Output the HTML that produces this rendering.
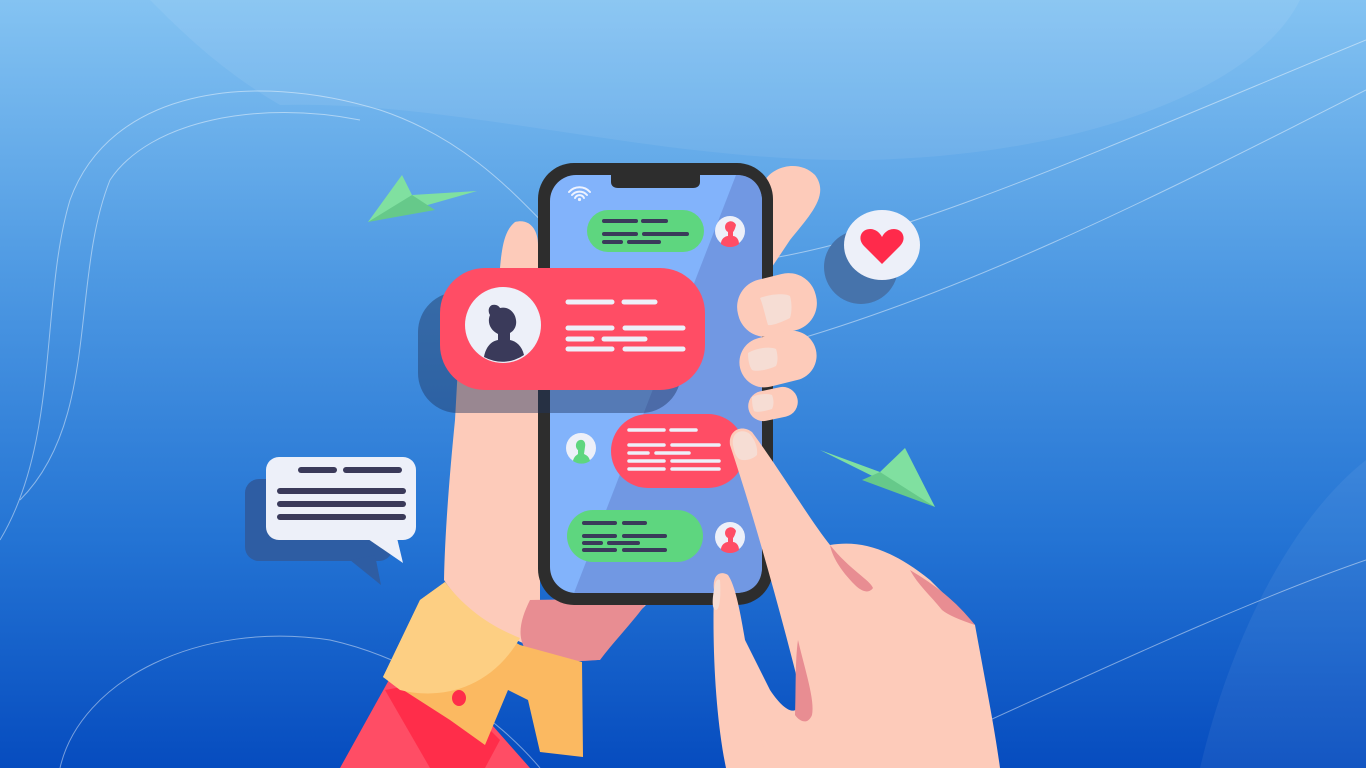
<!DOCTYPE html>
<html><head><meta charset="utf-8"><style>html,body{margin:0;padding:0;width:1366px;height:768px;overflow:hidden}svg{display:block}</style></head>
<body>
<svg width="1366" height="768" viewBox="0 0 1366 768" xmlns="http://www.w3.org/2000/svg">
<defs>
<linearGradient id="bg" x1="0" y1="0" x2="0" y2="1">
<stop offset="0" stop-color="#84c3f2"/><stop offset="0.35" stop-color="#4f9ae3"/><stop offset="0.7" stop-color="#2474d4"/><stop offset="1" stop-color="#064cbf"/>
</linearGradient>
</defs>
<rect width="1366" height="768" fill="url(#bg)"/>
<path d="M150 0 H1300 C1250 100 1050 160 850 160 C650 160 450 100 280 105 C220 70 180 30 150 0 Z" fill="#ffffff" opacity="0.07"/>
<path d="M1366 460 C1290 520 1230 640 1200 768 H1366 Z" fill="#ffffff" opacity="0.06"/>
<g fill="none" stroke="#ffffff" stroke-opacity="0.45" stroke-width="1">
<path d="M0 540 C60 440 40 300 70 200 C110 90 250 70 380 110 C470 140 520 200 560 240"/>
<path d="M20 500 C100 420 70 280 110 180 C150 120 260 100 360 120"/>
<path d="M760 260 C900 240 1100 150 1366 40"/>
<path d="M760 350 C950 300 1150 200 1366 90"/>
<path d="M60 768 C80 680 200 620 330 640 C420 660 500 720 540 768"/>
<path d="M990 720 C1100 670 1250 600 1366 560"/>
</g>
<polygon points="368,222 402,175 412,195 477,191" fill="#80e0a0"/>
<polygon points="368,222 412,195 435,210" fill="#66c98a"/>
<polygon points="820,450 880,472 905,448 935,507" fill="#80e0a0"/>
<polygon points="862,480 880,472 935,507" fill="#66c98a"/>
<rect x="245" y="479" width="148" height="82" rx="14" fill="#2e5da3"/>
<polygon points="350,560 381,585 375,555" fill="#2e5da3"/>
<rect x="266" y="457" width="150" height="83" rx="13" fill="#edf0f9"/>
<polygon points="368,539 403,563 397,538" fill="#edf0f9"/>
<g stroke="#3a3a5a" stroke-width="6" stroke-linecap="round">
<line x1="301" y1="470" x2="334" y2="470"/><line x1="346" y1="470" x2="399" y2="470"/>
<line x1="280" y1="491" x2="403" y2="491"/><line x1="280" y1="504" x2="403" y2="504"/><line x1="280" y1="517" x2="403" y2="517"/>
</g>
<circle cx="861" cy="267" r="37" fill="#4673ab"/>
<ellipse cx="882" cy="245" rx="38" ry="35" fill="#edf0f9"/>
<path d="M882 264 L864 246 C857 239 861 229 870 229 C876 229 880 233 882 237 C884 233 888 229 894 229 C903 229 907 239 900 246 Z" fill="#ff2a4b"/>
<polygon points="340,768 400,660 470,700 530,768" fill="#ff4d65"/>
<polygon points="385,690 440,680 500,740 485,768 430,768" fill="#ff2d4a"/>
<path d="M455 420 C450 470 445 530 444 580 C470 620 520 650 570 655 C600 640 640 615 650 600 L540 600 L540 260 C535 235 520 225 510 230 C500 245 500 270 500 290 L460 330 Z" fill="#fdcbba"/>
<path d="M530 600 C520 620 515 640 530 655 C560 665 590 660 600 660 C615 640 635 620 650 598 Z" fill="#e88d92"/>
<polygon points="383,677 420,600 445,582 475,620 520,645 582,662 583,757 540,752 528,700 508,690 485,745 450,720" fill="#fbb961"/>
<path d="M383 677 L420 600 L445 582 C470 615 500 630 520 638 C490 690 440 700 400 690 Z" fill="#fdcf83"/>
<ellipse cx="459" cy="698" rx="7" ry="8" fill="#ff2d4a"/>
<path d="M765 180 C775 165 800 160 815 175 C830 195 810 215 790 240 L770 270 Z" fill="#fdcbba"/>
<rect x="538" y="163" width="235" height="442" rx="36" fill="#2d2d2d"/>
<rect x="550" y="175" width="212" height="418" rx="26" fill="#82b3fb"/>
<path d="M737 175 H736 L574 593 H736 C752 593 762 583 762 567 V201 C762 186 752 175 737 175 Z" fill="#7198e3"/>
<path d="M611 175 H700 V182 C700 186 697 188 693 188 H618 C614 188 611 186 611 182 Z" fill="#2d2d2d"/>
<g fill="none" stroke="#eef3ff" stroke-width="2" stroke-linecap="round">
<path d="M569 192 A14 14 0 0 1 590 192"/><path d="M572 195 A10 10 0 0 1 587 195"/><path d="M575 198 A5 5 0 0 1 584 198"/>
</g>
<circle cx="579.5" cy="199.5" r="1.6" fill="#eef3ff"/>
<rect x="587" y="210" width="117" height="42" rx="21" fill="#5ed67f"/>
<g stroke="#3a3a5a" stroke-width="4" stroke-linecap="round">
<line x1="604" y1="221" x2="636" y2="221"/><line x1="643" y1="221" x2="666" y2="221"/>
<line x1="604" y1="234" x2="636" y2="234"/><line x1="644" y1="234" x2="687" y2="234"/>
<line x1="604" y1="242" x2="621" y2="242"/><line x1="629" y1="242" x2="659" y2="242"/>
</g>
<circle cx="730" cy="231" r="15" fill="#edf0f9"/>
<path d="M721 244 C721 238 726 236 728 236 L728 232 C724 230 724 224 728 222 C731 220 735 222 736 225 C735 229 734 231 733 232 L733 236 C735 236 739 238 739 244 A15 15 0 0 1 721 244 Z" fill="#ff4d65"/>
<rect x="611" y="414" width="134" height="74" rx="37" fill="#ff4d65"/>
<g stroke="#edf0f9" stroke-width="3.5" stroke-linecap="round">
<line x1="629" y1="430" x2="664" y2="430"/><line x1="671" y1="430" x2="696" y2="430"/>
<line x1="629" y1="445" x2="664" y2="445"/><line x1="672" y1="445" x2="719" y2="445"/>
<line x1="629" y1="453" x2="648" y2="453"/><line x1="656" y1="453" x2="689" y2="453"/>
<line x1="629" y1="461" x2="664" y2="461"/><line x1="672" y1="461" x2="719" y2="461"/>
<line x1="629" y1="469" x2="664" y2="469"/><line x1="672" y1="469" x2="719" y2="469"/>
</g>
<circle cx="581" cy="448" r="15" fill="#edf0f9"/>
<path d="M573 461 C574 456 577 455 578 454 L578 450 C575 448 575 441 580 440 C584 439 586 443 585 447 L584 454 C586 455 589 456 590 461 A15 15 0 0 1 573 461 Z" fill="#5ed67f"/>
<rect x="567" y="510" width="136" height="52" rx="26" fill="#5ed67f"/>
<g stroke="#3a3a5a" stroke-width="4" stroke-linecap="round">
<line x1="584" y1="523" x2="615" y2="523"/><line x1="624" y1="523" x2="645" y2="523"/>
<line x1="584" y1="536" x2="615" y2="536"/><line x1="624" y1="536" x2="665" y2="536"/>
<line x1="584" y1="543" x2="601" y2="543"/><line x1="609" y1="543" x2="638" y2="543"/>
<line x1="584" y1="550" x2="615" y2="550"/><line x1="624" y1="550" x2="665" y2="550"/>
</g>
<circle cx="730" cy="537" r="15" fill="#edf0f9"/>
<path d="M721 550 C721 544 726 542 728 542 L728 538 C724 536 724 530 728 528 C731 526 735 528 736 531 C735 535 734 537 733 538 L733 542 C735 542 739 544 739 550 A15 15 0 0 1 721 550 Z" fill="#ff4d65"/>
<rect x="737" y="276" width="80" height="58" rx="28" transform="rotate(-14 777 305)" fill="#fdcbba"/>
<path d="M760 298 C770 294 785 293 790 296 C792 303 792 312 790 318 C782 322 772 326 768 325 C765 315 763 305 760 298 Z" fill="#f6ddd4"/>
<rect x="739" y="334" width="78" height="50" rx="25" transform="rotate(-14 778 359)" fill="#fdcbba"/>
<path d="M748 353 C756 348 770 346 776 349 C778 355 778 362 776 366 C768 370 756 372 752 370 C749 366 748 359 748 353 Z" fill="#f6ddd4"/>
<rect x="748" y="389" width="50" height="30" rx="15" transform="rotate(-12 773 404)" fill="#fdcbba"/>
<path d="M752 397 C758 394 768 393 772 395 C774 400 774 405 772 409 C765 411 757 413 754 411 C752 406 752 401 752 397 Z" fill="#f6ddd4"/>
<rect x="418" y="292" width="263" height="121" rx="40" fill="#1e3560" opacity="0.45"/>
<rect x="440" y="268" width="265" height="122" rx="45" fill="#ff4d65"/>
<circle cx="503" cy="325" r="38" fill="#edf0f9"/>
<path d="M484 357 C486 346 492 341 498 340 L498 334 C490 330 487 322 490 315 C488 312 488 307 492 305 C496 304 499 306 500 308 C508 306 515 312 516 320 C517 326 514 331 510 333 L510 340 C516 341 522 346 524 355 A38 38 0 0 1 484 357 Z" fill="#3a3a5a"/>
<g stroke="#edf0f9" stroke-width="5" stroke-linecap="round">
<line x1="568" y1="302" x2="612" y2="302"/><line x1="624" y1="302" x2="655" y2="302"/>
<line x1="568" y1="328" x2="612" y2="328"/><line x1="625" y1="328" x2="683" y2="328"/>
<line x1="568" y1="339" x2="592" y2="339"/><line x1="604" y1="339" x2="645" y2="339"/>
<line x1="568" y1="349" x2="612" y2="349"/><line x1="625" y1="349" x2="683" y2="349"/>
</g>
<path d="M500 268 C502 245 505 230 515 222 C530 218 538 230 538 245 L538 268 Z" fill="#fdcbba"/>
<path d="M714 590 C712 575 720 570 728 575 C735 585 740 610 745 640 C750 690 760 730 772 768 L726 768 C716 720 712 650 714 590 Z" fill="#fdcbba"/>
<path d="M714 590 C712 600 712 610 716 610 C720 610 721 595 720 580 C717 578 715 582 714 590 Z" fill="#f6ddd4"/>
<path d="M730 445 C728 430 742 424 752 432 C780 470 810 520 830 545 C860 540 890 548 930 580 L975 625 C985 680 995 730 1000 768 L770 768 C755 720 745 690 745 640 L770 690 C790 720 803 715 800 690 C780 610 755 520 730 445 Z" fill="#fdcbba"/>
<path d="M830 545 C850 570 870 580 873 588 C868 595 860 590 855 585 C840 570 832 556 830 545 Z" fill="#e88d92"/>
<path d="M910 570 C935 585 955 600 975 625 C960 620 948 615 942 610 C930 595 918 585 910 570 Z" fill="#e88d92"/>
<path d="M798 640 C805 670 815 700 812 715 C808 725 800 722 795 715 C796 690 795 660 798 640 Z" fill="#e88d92"/>
<path d="M733 445 C731 432 742 428 750 434 C755 440 758 448 757 455 C752 460 742 462 738 458 C735 455 734 450 733 445 Z" fill="#f6ddd4"/>
</svg>
</body></html>
